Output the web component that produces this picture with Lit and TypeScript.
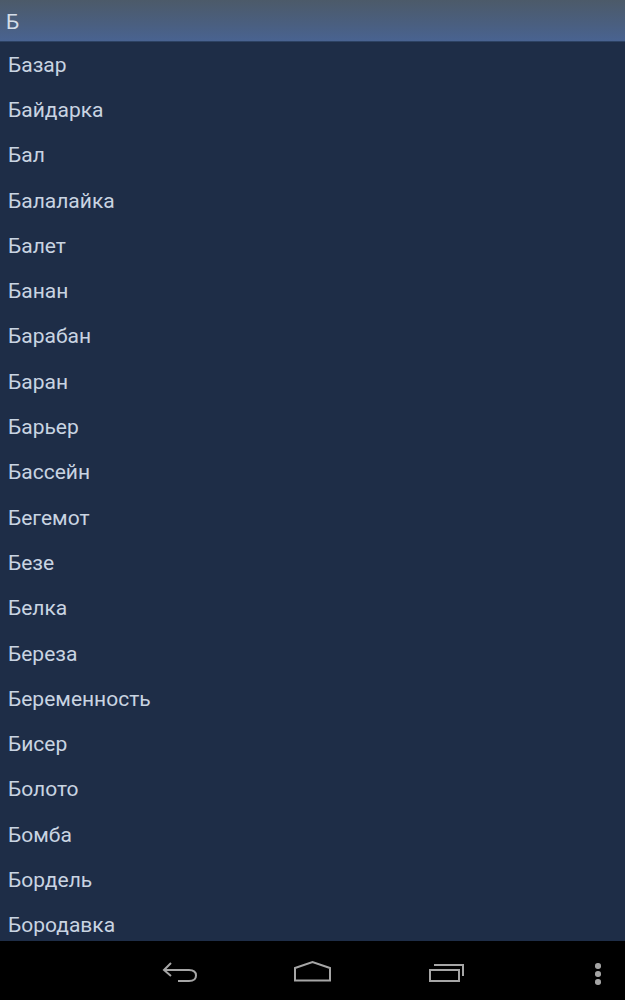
import { LitElement, html, css, svg } from "lit";
import { customElement } from "lit/decorators.js";

const WORDS = ["Базар","Байдарка","Бал","Балалайка","Балет","Банан","Барабан","Баран","Барьер","Бассейн","Бегемот","Безе","Белка","Береза","Беременность","Бисер","Болото","Бомба","Бордель","Бородавка"];

@customElement("app-root")
export class AppRoot extends LitElement {
  static styles = css`
    :host { display: flex; flex-direction: column; width: 625px; height: 1000px; background: #1e2d47; font-family: Roboto, "Noto Sans", sans-serif; overflow: hidden; }
    .header { flex: none; height: 42px; box-sizing: border-box; padding: 2px 0 0 6px; display: flex; align-items: center; font-size: 21px; color: #d4dde8; background: linear-gradient(180deg, #4c5a69 0%, #4a5f80 60%, #496391 100%); border-bottom: 1px solid #2d4263; }
    .list { flex: 1; min-height: 0; overflow: hidden; }
    .row { height: 45.3px; padding-left: 8px; display: flex; align-items: center; font-size: 21px; color: #c9d4e2; white-space: nowrap; }
    .nav { flex: none; height: 59px; background: #000; display: flex; align-items: center; position: relative; }
    svg { position: absolute; overflow: visible; fill: none; stroke: #a6a6a6; stroke-width: 2; }
    .dots { position: absolute; left: 595px; top: 22px; display: flex; flex-direction: column; gap: 2.6px; }
    .dots span { width: 5.5px; height: 5.5px; border-radius: 50%; background: #a4a4a4; }
  `;
  render() {
    return html`
      <div class="header">Б</div>
      <div class="list">${WORDS.map((w) => html`<div class="row">${w}</div>`)}</div>
      <div class="nav">
        <svg style="left:0;top:0" width="625" height="59" viewBox="0 0 625 59">
          ${svg`<path d="M171 22 L164 29 L171 35 M164 29 H189 Q196 29 196 34.5 Q196 40 189 40 H178"/>`}
          ${svg`<path d="M295 39.5 V27 L312.5 21 L330 27 V39.5 Z"/>`}
          ${svg`<rect x="430" y="29" width="29" height="11"/><path d="M434 24 H463 V35"/>`}
        </svg>
        <div class="dots"><span></span><span></span><span></span></div>
      </div>
    `;
  }
}
